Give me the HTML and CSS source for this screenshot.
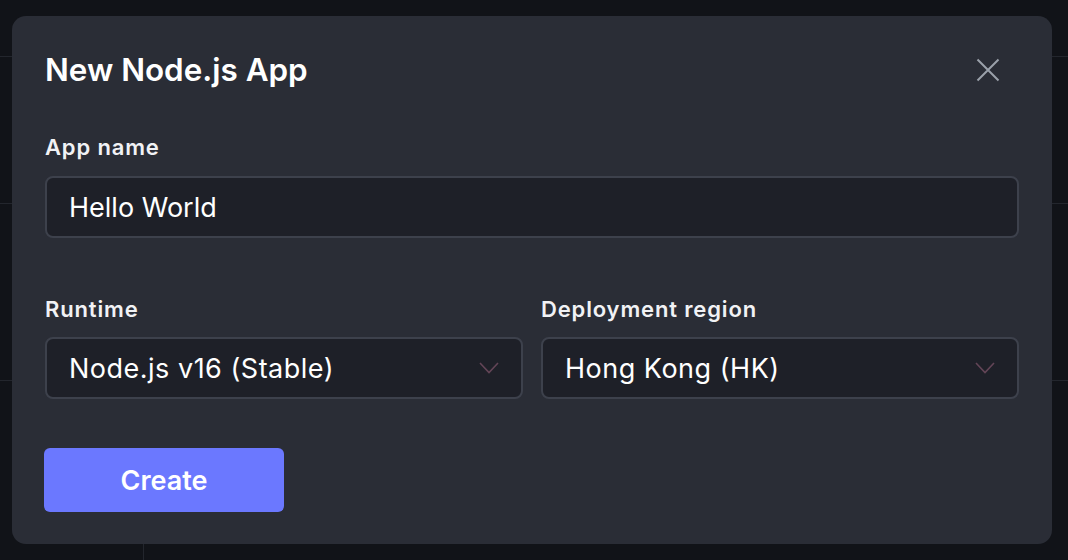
FILE: index.html
```html
<!DOCTYPE html>
<html lang="en">
<head>
<meta charset="utf-8">
<title>New Node.js App</title>
<link rel="stylesheet" href="styles.css">
</head>
<body>
  <div class="page">
    <div class="bg-row r1"></div>
    <div class="bg-row r2"></div>
    <div class="bg-row r3"></div>
    <div class="bg-foot"><div class="bg-col"></div></div>
  </div>

  <div class="modal" role="dialog" aria-labelledby="modal-title">
    <div class="modal-header">
      <h1 id="modal-title" class="modal-title">New Node.js App</h1>
      <button class="close-btn" aria-label="Close">
        <svg width="24" height="24" viewBox="0 0 24 24" fill="none" stroke="currentColor" stroke-width="2" stroke-linecap="butt">
          <path d="M1.5 1.5 L22.5 22.5 M22.5 1.5 L1.5 22.5"/>
        </svg>
      </button>
    </div>

    <div class="field">
      <label class="field-label">App name</label>
      <div class="control">Hello World</div>
    </div>

    <div class="field-row">
      <div class="field">
        <label class="field-label">Runtime</label>
        <div class="control select">
          <span class="select-value">Node.js v16 (Stable)</span>
          <svg class="chev" width="20" height="12" viewBox="0 0 20 12" fill="none" stroke="currentColor" stroke-width="1.6">
            <path d="M1 1 L10 10.5 L19 1"/>
          </svg>
        </div>
      </div>
      <div class="field">
        <label class="field-label">Deployment region</label>
        <div class="control select">
          <span class="select-value">Hong Kong (HK)</span>
          <svg class="chev" width="20" height="12" viewBox="0 0 20 12" fill="none" stroke="currentColor" stroke-width="1.6">
            <path d="M1 1 L10 10.5 L19 1"/>
          </svg>
        </div>
      </div>
    </div>

    <div class="actions">
      <button class="btn-primary">Create</button>
    </div>
  </div>
</body>
</html>
```

FILE: styles.css
```css
* { box-sizing: border-box; }

html, body {
  margin: 0;
  height: 100%;
}

body {
  background: #111318;
  font-family: Inter, "Noto Sans", sans-serif;
  color: #ffffff;
  overflow: hidden;
  position: relative;
}

/* background page behind modal */
.page {
  display: flex;
  flex-direction: column;
  height: 560px;
}
.bg-row { border-bottom: 1px solid #23262d; }
.r1 { height: 57px; }
.r2 { height: 147px; }
.r3 { height: 177px; }
.bg-foot { flex: 1; display: flex; }
.bg-col { width: 144px; border-right: 1px solid #23262d; }

/* modal */
.modal {
  position: absolute;
  left: 12px;
  top: 16px;
  width: 1040px;
  height: 528px;
  background: #2a2d36;
  border-radius: 14px;
  padding: 36px 33px 32px 33px;
  display: flex;
  flex-direction: column;
}

.modal-header {
  display: flex;
  align-items: center;
  justify-content: space-between;
  height: 36px;
  margin-bottom: 47px;
}

.modal-title {
  margin: 0;
  font-size: 31.4px;
  line-height: 36px;
  font-weight: 600;
}

.close-btn {
  background: none;
  border: none;
  padding: 0;
  margin-right: 19px;
  color: #9aa1ab;
  width: 24px;
  height: 24px;
  display: flex;
}

.field {
  display: flex;
  flex-direction: column;
  flex: 1;
  min-width: 0;
}

.field-label {
  font-size: 22px;
  line-height: 24px;
  font-weight: 600;
  letter-spacing: 0.85px;
  margin-bottom: 17px;
  color: #f1f2f5;
}

.control {
  height: 62px;
  background: #1e2028;
  border: 2px solid #3d414c;
  border-radius: 8px;
  padding: 0 22px;
  display: flex;
  align-items: center;
  font-size: 27px;
  font-weight: 400;
  color: #ffffff;
}

.select { justify-content: space-between; }
.select-value { letter-spacing: 0.5px; }
.select .chev { color: #634557; }

.field-row {
  display: flex;
  gap: 18px;
  margin-top: 58px;
}
.field-row .field-label { margin-bottom: 16px; }

.actions {
  margin-top: 49px;
}

.btn-primary {
  width: 240px;
  height: 64px;
  border: none;
  border-radius: 6px;
  background: #6b78ff;
  color: #ffffff;
  font-family: Inter, "Noto Sans", sans-serif;
  font-size: 27px;
  font-weight: 600;
  margin-left: -1px;
}
```
